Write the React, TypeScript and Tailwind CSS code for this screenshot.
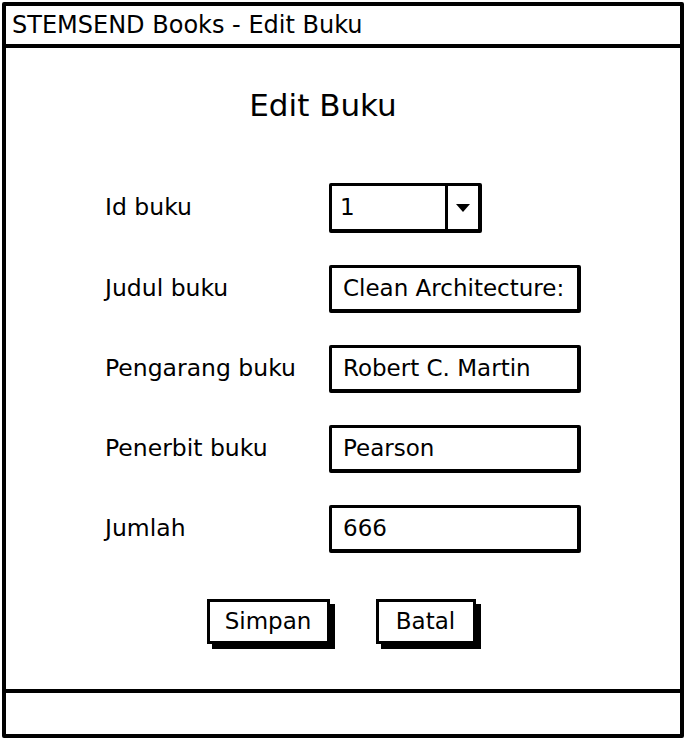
const fields = [
  { label: 'Judul buku', value: 'Clean Architecture:' },
  { label: 'Pengarang buku', value: 'Robert C. Martin' },
  { label: 'Penerbit buku', value: 'Pearson' },
  { label: 'Jumlah', value: '666' },
];

function Label({ children }: { children: string }) {
  return <span className="w-[323px] shrink-0 whitespace-nowrap pl-[99px] text-[23.5px] leading-none">{children}</span>;
}

export default function App() {
  return (
    <div className="h-[740px] w-[686px] bg-white p-[2px] font-['DejaVu_Sans',sans-serif] text-black">
      <div className="flex h-full flex-col rounded-[2px] border-[4px] border-black">
        {/* Judul jendela */}
        <div className="flex h-[42px] items-center border-b-[4px] border-black px-[6px] text-[24px] leading-none">
          STEMSEND Books - Edit Buku
        </div>

        {/* Isi */}
        <div className="flex flex-1 flex-col">
          <h1 className="mt-[42px] pr-[40px] text-center text-[31px] leading-none">Edit Buku</h1>

          <div className="mt-[62px] flex flex-col gap-[32px]">
            <div className="flex items-center">
              <Label>Id buku</Label>
              <div className="flex h-[50px] w-[153px] items-stretch rounded-[2px] border-[3px] border-b-[4px] border-r-[4px] border-black">
                <span className="flex flex-1 items-center px-[8px] text-[23px]">1</span>
                <span className="flex w-[33px] items-center justify-center border-l-[3px] border-black">
                  <svg width="16" height="10" viewBox="0 0 16 10">
                    <path d="M1 1 L15 1 L8 9 Z" fill="black" />
                  </svg>
                </span>
              </div>
            </div>

            {fields.map((f) => (
              <div key={f.label} className="flex items-center">
                <Label>{f.label}</Label>
                <div className="flex h-[48px] w-[252px] items-center overflow-hidden whitespace-nowrap rounded-[2px] border-[3px] border-b-[4px] border-r-[4px] border-black px-[11px] text-[23px]">
                  {f.value}
                </div>
              </div>
            ))}
          </div>

          <div className="mt-[46px] flex justify-center gap-[46px] pr-[4px]">
            <button className="h-[45px] w-[123px] border-[3px] border-black text-[23px] shadow-[5px_5px_0_0_#000]">
              Simpan
            </button>
            <button className="h-[45px] w-[100px] border-[3px] border-black text-[23px] shadow-[5px_5px_0_0_#000]">
              Batal
            </button>
          </div>
        </div>

        {/* Status bar */}
        <div className="h-[45px] border-t-[4px] border-black" />
      </div>
    </div>
  );
}
